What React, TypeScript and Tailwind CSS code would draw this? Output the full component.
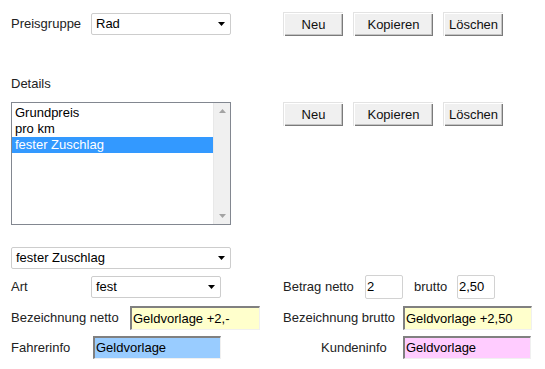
import React from "react";

function Arrow() {
  return (
    <svg width="7" height="4" viewBox="0 0 7 4" className="shrink-0">
      <polygon points="0,0 7,0 3.5,4" fill="#000" />
    </svg>
  );
}

function Select({ value, w }: { value: string; w: string }) {
  return (
    <div
      className={`${w} h-[22px] flex items-center justify-between border border-[#cdcdcd] rounded-[2px] bg-white pl-[4px] pr-[5px] text-black`}
    >
      <span className="leading-[16px]">{value}</span>
      <Arrow />
    </div>
  );
}

function Btn({ label, w }: { label: string; w: string }) {
  return (
    <div
      className={`${w} h-[24px] flex items-center justify-center bg-[#f0f0f0] text-[#111] shadow-[inset_1px_1px_#ffffff,inset_-1px_-1px_#7a7a7a,inset_-2px_-2px_#c4c4c4] border-t border-l border-[#e3e3e3]`}
    >
      {label}
    </div>
  );
}

function Buttons() {
  return (
    <div className="flex gap-[10px] ml-[52px]">
      <Btn label="Neu" w="w-[60px]" />
      <Btn label="Kopieren" w="w-[80px]" />
      <Btn label="Löschen" w="w-[60px]" />
    </div>
  );
}

function Inset({ value, w, bg, h }: { value: string; w: string; bg: string; h: string }) {
  return (
    <div
      className={`${w} ${h} ${bg} flex items-center border-t-2 border-l-2 border-t-[#808080] border-l-[#808080] border-r border-b border-r-[#f0f0f0] border-b-[#f0f0f0] pl-[1px] text-black`}
    >
      {value}
    </div>
  );
}

function Small({ value }: { value: string }) {
  return (
    <div className="w-[38px] h-[24px] flex items-center border border-[#d2d2d2] rounded-[2px] bg-white pl-[1px] text-black">
      {value}
    </div>
  );
}

export default function App() {
  return (
    <div className="w-[545px] h-[369px] bg-white pl-[11px] pt-[12px] text-[13px] text-[#222] font-['Liberation_Sans',Arial,sans-serif] leading-[16px] overflow-hidden">
      {/* Row 1 */}
      <div className="flex items-center h-[24px]">
        <div className="w-[80px]">Preisgruppe</div>
        <Select value="Rad" w="w-[140px]" />
        <Buttons />
      </div>

      {/* Details label */}
      <div className="mt-[40px] h-[16px]">Details</div>

      {/* Row 2 */}
      <div className="flex items-start mt-[10px]">
        <div className="w-[220px] h-[123px] border border-[#828790] bg-white flex">
          <div className="flex-1 pt-[2px] text-black">
            <div className="h-[16px] pl-[3px]">Grundpreis</div>
            <div className="h-[16px] pl-[3px]">pro km</div>
            <div className="h-[16px] pl-[3px] bg-[#3399ff] text-white">fester Zuschlag</div>
          </div>
          <div className="w-[17px] bg-[#f0f0f0] border-l border-[#e8e8e8] flex flex-col justify-between items-center py-[6px]">
            <svg width="7" height="4" viewBox="0 0 7 4">
              <polygon points="3.5,0 7,4 0,4" fill="#a3a3a3" />
            </svg>
            <svg width="7" height="4" viewBox="0 0 7 4">
              <polygon points="0,0 7,0 3.5,4" fill="#a3a3a3" />
            </svg>
          </div>
        </div>
        <Buttons />
      </div>

      {/* Select fester Zuschlag */}
      <div className="mt-[22px]">
        <Select value="fester Zuschlag" w="w-[220px]" />
      </div>

      {/* Art / Betrag row */}
      <div className="flex items-center mt-[6px] h-[24px]">
        <div className="w-[272px] flex items-center">
          <div className="w-[80px]">Art</div>
          <Select value="fest" w="w-[130px]" />
        </div>
        <div className="w-[82px]">Betrag netto</div>
        <Small value="2" />
        <div className="w-[54px] pl-[11px]">brutto</div>
        <Small value="2,50" />
      </div>

      {/* Bezeichnung row */}
      <div className="flex items-center mt-[7px]">
        <div className="w-[272px] flex items-center">
          <div className="w-[119px]">Bezeichnung netto</div>
          <Inset value="Geldvorlage +2,-" w="w-[130px]" h="h-[24px]" bg="bg-[#ffffcc]" />
        </div>
        <div className="w-[120px]">Bezeichnung brutto</div>
        <Inset value="Geldvorlage +2,50" w="w-[129px]" h="h-[24px]" bg="bg-[#ffffcc]" />
      </div>

      {/* Info row */}
      <div className="flex items-center mt-[6px]">
        <div className="w-[272px] flex items-center">
          <div className="w-[82px]">Fahrerinfo</div>
          <Inset value="Geldvorlage" w="w-[128px]" h="h-[23px]" bg="bg-[#99ccff]" />
        </div>
        <div className="w-[120px] pl-[38px]">Kundeninfo</div>
        <Inset value="Geldvorlage" w="w-[128px]" h="h-[23px]" bg="bg-[#ffccff]" />
      </div>
    </div>
  );
}
